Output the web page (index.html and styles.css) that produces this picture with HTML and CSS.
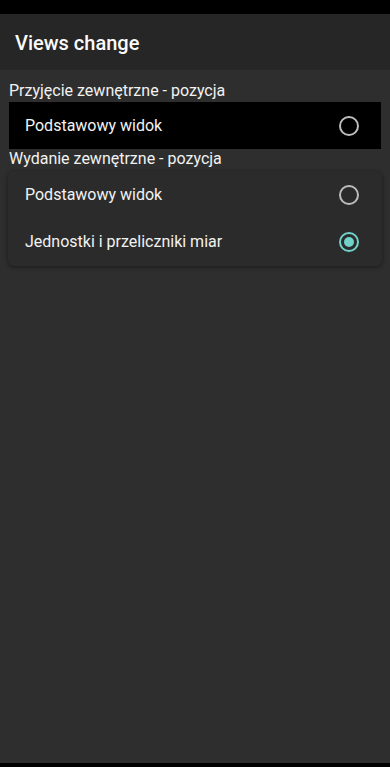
FILE: index.html
```html
<!DOCTYPE html>
<html lang="pl">
<head>
    <meta charset="UTF-8">
    <meta name="viewport" content="width=device-width, initial-scale=1.0">
    <title>Views change</title>
    <link rel="stylesheet" href="styles.css">
</head>
<body>
    <div class="status-bar"></div>
    <header class="app-bar">
        <h1 class="title">Views change</h1>
    </header>

    <main class="content">
        <div class="group-label">Przyjęcie zewnętrzne - pozycja</div>
        <div class="option-list option-list--dark">
            <label class="option">
                <span class="option-text">Podstawowy widok</span>
                <span class="radio"></span>
            </label>
        </div>

        <div class="group-label">Wydanie zewnętrzne - pozycja</div>
        <div class="option-list option-list--card">
            <label class="option">
                <span class="option-text">Podstawowy widok</span>
                <span class="radio"></span>
            </label>
            <label class="option">
                <span class="option-text">Jednostki i przeliczniki miar</span>
                <span class="radio radio--checked"></span>
            </label>
        </div>
    </main>

    <div class="nav-bar"></div>
</body>
</html>
```

FILE: styles.css
```css
:root {
    --bg: #2e2e2e;
    --header: #262626;
    --text: #f2f2f2;
    --radio: #bdbdbd;
    --accent: #6fd3c9;
}

html, body {
    height: 100%;
}

body {
    margin: 0;
    font-family: Roboto, "Noto Sans", sans-serif;
    background-color: var(--bg);
    color: var(--text);
    display: flex;
    flex-direction: column;
}

.status-bar {
    height: 14px;
    background-color: #000;
}

.app-bar {
    height: 56px;
    background-color: var(--header);
    display: flex;
    align-items: center;
    padding: 0 15px;
}

.title {
    margin: 0;
    padding-top: 2px;
    font-size: 20px;
    font-weight: 500;
    color: #fafafa;
}

.content {
    flex: 1;
    padding: 11px 9px 0 9px;
}

.group-label {
    font-size: 16px;
    line-height: 19px;
}

.option-list--dark {
    margin-top: 2px;
    background-color: #000;
}

.option-list--card {
    margin: 3px -1px 0 -1px;
    background-color: #2b2b2b;
    border-radius: 6px;
    box-shadow: 0 1px 4px rgba(0, 0, 0, 0.45);
    padding: 0 0 1px 0;
}

.option {
    display: flex;
    align-items: center;
    justify-content: space-between;
    height: 47px;
    padding: 0 22px 0 16px;
}

.option-list--card .option {
    padding-left: 17px;
    padding-right: 23px;
}

.option-text {
    font-size: 16px;
}

.radio {
    width: 16px;
    height: 16px;
    border: 2px solid var(--radio);
    border-radius: 50%;
    display: flex;
    align-items: center;
    justify-content: center;
}

.radio--checked {
    border-color: var(--accent);
}

.radio--checked::after {
    content: "";
    width: 10px;
    height: 10px;
    border-radius: 50%;
    background-color: var(--accent);
}

.nav-bar {
    height: 4px;
    background-color: #000;
}
```
